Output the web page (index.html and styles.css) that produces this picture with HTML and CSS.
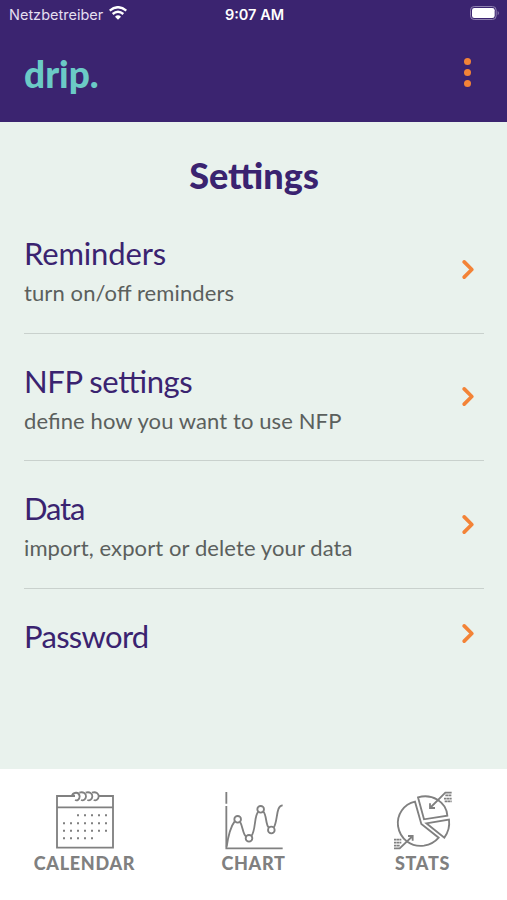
FILE: index.html
```html
<!DOCTYPE html>
<html lang="en">
<head>
    <meta charset="UTF-8">
    <meta name="viewport" content="width=device-width, initial-scale=1.0">
    <title>drip. Settings</title>
    <link rel="stylesheet" href="styles.css">
</head>
<body>

    <div class="app">
        <header class="header">
            <!-- Phone status bar -->
            <div class="status-bar">
                <div class="carrier">
                    <span>Netzbetreiber</span>
                    <svg class="wifi" viewBox="0 0 54 42">
                        <path d="M2 14 Q27 -7 52 14" stroke-width="7" />
                        <path d="M11 24 Q27 10 43 24" stroke-width="7" />
                        <path d="M18 32 Q27 24 36 32 L27 41 Z" class="wifi-dot" />
                    </svg>
                </div>
                <span class="time">9:07 AM</span>
                <div class="battery-wrap">
                    <svg class="battery" viewBox="0 0 90 42">
                        <rect x="1.5" y="1.5" width="77" height="39" rx="11" class="battery-frame" />
                        <rect x="6" y="6" width="68" height="30" rx="7" class="battery-level" />
                        <path d="M83 14 Q90 21 83 28 Z" class="battery-tip" />
                    </svg>
                </div>
            </div>

            <div class="title-bar">
                <div class="logo">drip.</div>
                <div class="menu">
                    <span></span>
                    <span></span>
                    <span></span>
                </div>
            </div>
        </header>

        <!-- Settings list -->
        <main class="content">
            <h1>Settings</h1>

            <div class="row">
                <div class="row-text">
                    <h2 class="reminders">Reminders</h2>
                    <p>turn on/off reminders</p>
                </div>
                <svg class="chevron" viewBox="0 0 12 20"><path d="M2 2 L10 10 L2 18" /></svg>
            </div>

            <div class="row">
                <div class="row-text">
                    <h2 class="nfp">NFP settings</h2>
                    <p>define how you want to use NFP</p>
                </div>
                <svg class="chevron" viewBox="0 0 12 20"><path d="M2 2 L10 10 L2 18" /></svg>
            </div>

            <div class="row">
                <div class="row-text">
                    <h2 class="data">Data</h2>
                    <p>import, export or delete your data</p>
                </div>
                <svg class="chevron" viewBox="0 0 12 20"><path d="M2 2 L10 10 L2 18" /></svg>
            </div>

            <div class="row">
                <div class="row-text">
                    <h2 class="password">Password</h2>
                </div>
                <svg class="chevron" viewBox="0 0 12 20"><path d="M2 2 L10 10 L2 18" /></svg>
            </div>
        </main>

        <!-- Bottom navigation -->
        <nav class="nav">
            <div class="nav-item">
                <svg class="nav-icon" viewBox="45 30 180 180">
                    <path d="M105 48 H51 V203 H219 V48 H176 M51 82 H219" />
                    <path d="M95 50 C98 36 117 33 119 49 C119 58 112 63 105 60" />
                    <path d="M118 38 C130 34 139 41 138 50 C137 59 130 63 123 60" />
                    <path d="M137 38 C149 34 158 41 157 50 C156 59 149 63 142 60" />
                    <path d="M156 38 C168 34 177 41 176 50 C175 59 168 63 161 60" />
                    <g class="dots">
                        <path d="M111 106 H201" />
                        <path d="M69 130 H201" />
                        <path d="M69 152 H201" />
                        <path d="M69 175 H159" />
                    </g>
                </svg>
                <span>CALENDAR</span>
            </div>
            <div class="nav-item">
                <svg class="nav-icon" viewBox="55 30 180 180">
                    <path d="M62 36 V71 M62 78 V205 H231" />
                    <path d="M63 200 C67 172 77 137 87 124 M103 125 C112 139 111 164 122 170 M137 168 C151 152 145 105 158 95 M173 95 C184 106 179 136 190 143 M204 143 C217 124 210 76 231 76" />
                    <circle cx="96" cy="118" r="10" />
                    <circle cx="130" cy="175" r="10" />
                    <circle cx="165" cy="88" r="10" />
                    <circle cx="197" cy="150" r="10" />
                </svg>
                <span>CHART</span>
            </div>
            <div class="nav-item">
                <svg class="nav-icon" viewBox="52 30 180 180">
                    <path d="M118 65 C84 73 63 103 67 138 C73 178 107 202 145 197 C163 194 179 185 189 173 L137 132 Z" />
                    <path d="M127 52 C169 40 212 65 215 107 L145 118 Z" />
                    <path d="M152 130 L220 119 C223 142 217 158 206 173 Z" />
                    <path d="M228 38 H209 L163 84 M163 70 V84 H178" />
                    <path d="M55 205 H72 L111 168 M97 168 H111 V182" />
                    <g class="notes">
                        <path d="M209 46 H228 M205 56 H228 M207 64 H228" />
                        <path d="M55 179 H77 M55 188 H77 M55 197 H73" />
                    </g>
                </svg>
                <span>STATS</span>
            </div>
        </nav>
    </div>

</body>
</html>
```
FILE: styles.css
```css
body {
    font-family: Lato, sans-serif;
    margin: 0;
    padding: 0;
}

.app {
    display: flex;
    flex-direction: column;
    height: 900px;
    background-color: #e9f2ed;
    overflow: hidden;
}

/* Header */
.header {
    height: 122px;
    background-color: #3b2470;
}

.status-bar {
    display: grid;
    grid-template-columns: 1fr auto 1fr;
    align-items: center;
    height: 28px;
    padding: 0 7px 0 9px;
    font-family: Inter, sans-serif;
    font-size: 14.5px;
    color: #fff;
}

.carrier {
    display: flex;
    align-items: center;
    gap: 6px;
    color: #e4dff0;
}

.wifi {
    width: 18px;
    height: 14px;
    margin-top: -2px;
    fill: none;
    stroke: #fff;
}

.wifi-dot {
    fill: #fff;
    stroke: none;
}

.time {
    font-weight: 600;
}

.battery-wrap {
    display: flex;
    justify-content: flex-end;
}

.battery {
    width: 30px;
    height: 14px;
    margin-top: -2px;
}

.battery-frame {
    fill: none;
    stroke: #8f81b0;
    stroke-width: 3;
}

.battery-level {
    fill: #fff;
}

.battery-tip {
    fill: #8f81b0;
}

.title-bar {
    display: flex;
    justify-content: space-between;
    align-items: center;
    height: 89px;
    padding: 0 36px 0 24px;
}

.logo {
    margin-top: 3px;
    font-size: 37px;
    font-weight: 900;
    line-height: 40px;
    color: #6bcac6;
}

.menu {
    display: flex;
    flex-direction: column;
    gap: 4px;
}

.menu span {
    width: 7px;
    height: 7px;
    border-radius: 50%;
    background-color: #f38337;
}

/* Settings list */
.content {
    flex: 1;
    padding: 32px 23px 0 24px;
}

h1 {
    margin: 0 0 9.3px;
    font-size: 36px;
    font-weight: 900;
    line-height: 43px;
    text-align: center;
    color: #3a2370;
}

/* keep the tt ligatures when letters are spaced */
h2,
.row p {
    font-feature-settings: "liga" 1;
}

.row {
    display: flex;
    justify-content: space-between;
    align-items: center;
    padding: 28px 10px 24.5px 0;
    border-bottom: 1px solid #c9d1cd;
}

.row:last-child {
    border-bottom: none;
}

h2 {
    margin: 0;
    font-size: 31px;
    font-weight: 400;
    line-height: 38px;
    color: #3a2370;
}

.reminders {
    letter-spacing: -0.15px;
}

.nfp {
    letter-spacing: -0.4px;
}

.data {
    letter-spacing: -1.2px;
}

.password {
    letter-spacing: -0.7px;
}

.row p {
    margin: 6px 0 0;
    font-size: 22px;
    line-height: 30px;
    letter-spacing: 0.1px;
    color: #5b605d;
}

.chevron {
    width: 12px;
    height: 19px;
    margin-bottom: 4px;
    fill: none;
    stroke: #f38337;
    stroke-width: 3.8;
    stroke-linecap: round;
    stroke-linejoin: round;
}

/* Bottom navigation */
.nav {
    display: flex;
    height: 131px;
    background-color: #fff;
}

.nav-item {
    flex: 1;
    display: flex;
    flex-direction: column;
    align-items: center;
    padding-top: 21px;
    font-size: 18px;
    font-weight: 900;
    line-height: 26px;
    letter-spacing: 0.7px;
    color: #808080;
}

.nav-icon {
    width: 60px;
    height: 60px;
    fill: none;
    stroke: #808080;
    stroke-width: 5.5;
}

.dots {
    stroke-width: 6;
    stroke-dasharray: 6 15;
}

.notes {
    stroke-width: 5;
    stroke-dasharray: 8 1;
}
```
